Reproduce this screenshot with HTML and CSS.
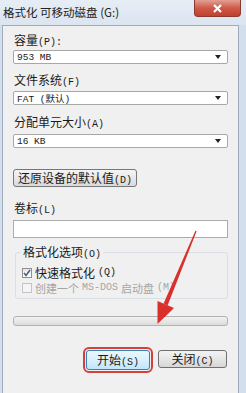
FILE: index.html
```html
<!DOCTYPE html>
<html>
  <head>
    <title>格式化 可移动磁盘 (G:)</title>
    <link rel="stylesheet" href="styles.css">
  </head>
  <body>
    <div class="window">
      <div class="titlebar">
        <span class="title">格式化 可移动磁盘 (G:)</span>
        <span class="close">
          <svg width="11" height="9" viewBox="0 0 11 9"><path d="M2 1 L9 8 M9 1 L2 8" stroke="#fff" stroke-width="2.2"/></svg>
        </span>
      </div>
      <div class="client">
        <div class="label l1">容量<small>(P):</small></div>
        <div class="select s1"><span>953 MB</span><i class="arrow"></i></div>
        <div class="label l2">文件系统<small>(F)</small></div>
        <div class="select s2"><span>FAT (默认)</span><i class="arrow"></i></div>
        <div class="label l3">分配单元大小<small>(A)</small></div>
        <div class="select s3"><span>16 KB</span><i class="arrow"></i></div>
        <div class="restore">还原设备的默认值<small>(D)</small></div>
        <div class="label l4">卷标<small>(L)</small></div>
        <div class="input"></div>
        <div class="group">
          <span class="legend">格式化选项<small>(O)</small></span>
          <div class="check"><i class="box">
            <svg width="8" height="8" viewBox="0 0 8 8"><path d="M1 4 L3 6.5 L7 1" fill="none" stroke="#4a5f80" stroke-width="1.5"/></svg>
          </i>快速格式化<small>(Q)</small></div>
          <div class="check off"><i class="box"></i>创建一个 <small>MS-DOS</small> 启动盘<small>(M)</small></div>
        </div>
        <div class="progress"></div>
        <div class="actions">
          <div class="btn primary">开始<small>(S)</small></div>
          <div class="btn">关闭<small>(C)</small></div>
        </div>
      </div>
    </div>
    <svg class="pointer" width="246" height="393" viewBox="0 0 246 393">
      <polygon points="196.6,231.3 195.4,230.7 163.6,303.6 167.6,305.4" fill="#d8302c"/>
      <polygon points="174,308 157.5,301 157.5,324" fill="#d8302c"/>
    </svg>
  </body>
</html>
```
FILE: styles.css
```css
body {
  margin: 0;
  width: 246px;
  height: 393px;
  background: #d3dfec;
  font-family: "Noto Sans CJK SC", "DejaVu Sans", sans-serif;
  font-size: 12px;
  color: #1a1a1a;
  overflow: hidden;
  position: relative;
}
* {
  box-sizing: border-box;
}
small {
  font-size: 10px;
  font-family: "Liberation Mono", "Noto Sans CJK SC", monospace;
}
.window {
  display: flex;
  flex-direction: column;
  height: 393px;
}
.titlebar {
  display: flex;
  height: 25px;
  background: linear-gradient(#e6edf5, #dbe5f0);
}
.title {
  padding: 5px 0 0 3px;
  font-size: 11.5px;
  line-height: 15px;
  color: #222;
}
.close {
  display: flex;
  justify-content: center;
  align-items: center;
  margin-left: auto;
  margin-right: 5px;
  width: 47px;
  height: 17px;
  border: 1px solid #8a3a2e;
  border-top: 0;
  border-radius: 0 0 4px 4px;
  background: linear-gradient(#e3a093, #cf5a47 50%, #c0412f);
}
.client {
  flex-grow: 1;
  margin: 0 7px 0 2px;
  padding: 0 10px;
  background: #f0f0f0;
  border: 1px solid #9eacbd;
  border-bottom: 0;
  display: flex;
  flex-direction: column;
}
.label {
  height: 14px;
  line-height: 14px;
  padding-left: 1px;
}
.l1 { margin-top: 7px; }
.l2 { margin-top: 9px; }
.l3 { margin-top: 10px; }
.l4 { margin-top: 14px; }
.select {
  display: flex;
  align-items: center;
  height: 14px;
  background: #fff;
  border: 1px solid #a8a8a8;
  border-radius: 2px;
  padding: 0 6px 0 3px;
  font-family: "Liberation Mono", "Noto Sans CJK SC", monospace;
  font-size: 9.5px;
}
.s1 { margin-top: 3px; }
.s2 { margin-top: 4px; }
.s3 { margin-top: 5px; }
.select small {
  font-size: 9.5px;
}
.arrow {
  margin-left: auto;
  border-left: 3.5px solid transparent;
  border-right: 3.5px solid transparent;
  border-top: 4px solid #222;
}
.restore {
  align-self: flex-start;
  margin-top: 21px;
  width: 124px;
  height: 18px;
  border: 1px solid #777;
  border-radius: 3px;
  background: linear-gradient(#f4f4f4, #e8e8e8 50%, #d9d9d9);
  text-align: center;
  line-height: 16px;
}
.input {
  height: 18px;
  margin-top: 5px;
  background: #fff;
  border: 1px solid #acacac;
}
.group {
  position: relative;
  margin: 14px 0 0 2px;
  height: 47px;
  border: 1px solid #d9dee4;
  border-radius: 3px;
  padding: 13px 0 0 6px;
  display: flex;
  flex-direction: column;
  gap: 1px;
}
.legend {
  position: absolute;
  top: -9px;
  left: 5px;
  padding: 0 2px;
  background: #f0f0f0;
  line-height: 16px;
}
.check {
  display: flex;
  align-items: center;
  gap: 3px;
  height: 14px;
  line-height: 14px;
}
.check.off {
  color: #a6a6a6;
  font-size: 11px;
}
.box {
  display: flex;
  justify-content: center;
  align-items: center;
  width: 10px;
  height: 10px;
  border: 1px solid #8e8f8f;
  background: linear-gradient(#e6e6e6, #fff);
}
.check.off .box {
  border-color: #c4c4c4;
  background: #f4f4f4;
}
.progress {
  height: 10px;
  margin-top: 17px;
  border: 1px solid #b2b2b2;
  border-radius: 3px;
  background: linear-gradient(#f2f2f2, #dcdcdc);
}
.actions {
  display: flex;
  justify-content: flex-end;
  align-items: flex-start;
  gap: 8px;
  margin-top: 24px;
  padding-right: 1px;
}
.btn {
  width: 69px;
  height: 18px;
  border: 1px solid #707070;
  border-radius: 3px;
  background: linear-gradient(#f3f3f3, #e6e6e6 50%, #d6d6d6);
  text-align: center;
  line-height: 16px;
}
.btn.primary {
  width: 64px;
  height: 20px;
  border-color: #3c7fb1;
  background: linear-gradient(#eaf6fd, #d9f0fc 50%, #bee6fd);
  line-height: 18px;
  outline: 2px solid #d6403a;
  outline-offset: 1px;
}
.pointer {
  position: absolute;
  left: 0;
  top: 0;
  pointer-events: none;
}
```
